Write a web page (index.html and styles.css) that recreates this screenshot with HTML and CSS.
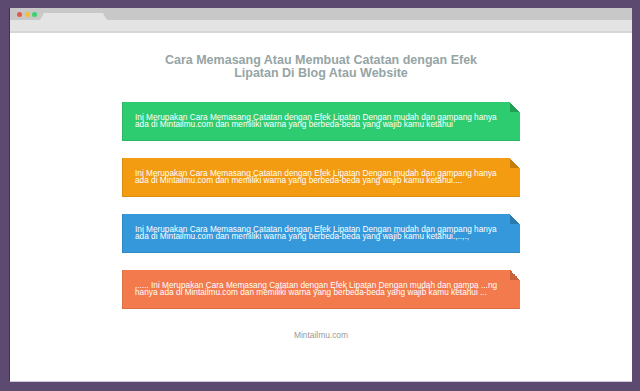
FILE: index.html
```html
<!DOCTYPE html>
<html>
<head>
<meta charset="utf-8">
<link rel="stylesheet" href="styles.css">
</head>
<body>
<div class="window">
  <div class="titlebar">
    <span class="dot red"></span>
    <span class="dot yellow"></span>
    <span class="dot green"></span>
    <svg class="tab" width="67" height="7" viewBox="0 0 67 7"><polygon points="0,7 4,0 63,0 67,7" fill="#e4e4e4"/></svg>
  </div>
  <div class="toolbar"></div>
  <div class="page">
    <h1 class="title">Cara Memasang Atau Membuat Catatan dengan Efek<br>Lipatan Di Blog Atau Website</h1>
    <div class="note note-green"><p class="note-text">Ini Merupakan Cara Memasang Catatan dengan Efek Lipatan Dengan mudah dan gampang hanya ada di Mintailmu.com dan memiliki warna yang berbeda-beda yang wajib kamu ketahui</p></div>
    <div class="note note-orange"><p class="note-text">Ini Merupakan Cara Memasang Catatan dengan Efek Lipatan Dengan mudah dan gampang hanya ada di Mintailmu.com dan memiliki warna yang berbeda-beda yang wajib kamu ketahui....</p></div>
    <div class="note note-blue"><p class="note-text">Ini Merupakan Cara Memasang Catatan dengan Efek Lipatan Dengan mudah dan gampang hanya ada di Mintailmu.com dan memiliki warna yang berbeda-beda yang wajib kamu ketahui.,..,.,</p></div>
    <div class="note note-red"><p class="note-text">...... Ini Merupakan Cara Memasang Catatan dengan Efek Lipatan Dengan mudah dan gampa ...ng hanya ada di Mintailmu.com dan memiliki warna yang berbeda-beda yang wajib kamu ketahui ...</p></div>
    <div class="footer">Mintailmu.com</div>
  </div>
</div>
</body>
</html>
```

FILE: styles.css
```css
html, body {
  margin: 0;
  padding: 0;
}
body {
  background: #5d4a70;
  padding: 8px 8px 10px 10px;
  font-family: "Liberation Sans", Arial, sans-serif;
}
.window {
  width: 622px;
  height: 373px;
  background: #fff;
  display: flex;
  flex-direction: column;
  box-shadow: -1px 0 0 #432f5c, 0 1px 0 #cfc8d6;
}
.titlebar {
  height: 12px;
  background: #c8c8c8;
  display: flex;
  align-items: center;
  padding-left: 7px;
  gap: 2.5px;
}
.dot {
  width: 5px;
  height: 5px;
  border-radius: 50%;
  margin-top: 1px;
}
.dot.red { background: #e9564a; }
.dot.yellow { background: #f2c12e; }
.dot.green { background: #3fd070; }
.tab {
  align-self: flex-end;
  display: block;
}
.toolbar {
  height: 11px;
  background: #e4e4e4;
  border-bottom: 2px solid #d6d6d6;
}
.page {
  flex: 1;
  display: flex;
  flex-direction: column;
  align-items: center;
  padding-top: 21px;
}
.title {
  margin: 0 0 22px;
  font-size: 12.5px;
  line-height: 13px;
  font-weight: bold;
  color: #95a5a6;
  text-align: center;
}
.note {
  position: relative;
  box-sizing: border-box;
  width: 398px;
  height: 39px;
  padding: 0 15px 0 13px;
  margin-bottom: 17px;
  display: flex;
  align-items: center;
  border-bottom: 1px solid var(--edge);
  border-left: 1px solid var(--edge);
  padding-left: 12px;
}
.note-text {
  margin: 0;
  font-size: 8.27px;
  line-height: 7.5px;
  color: #fff;
}
.note::after {
  content: "";
  position: absolute;
  top: 0;
  right: 0;
  width: 10px;
  height: 10px;
  background: linear-gradient(45deg, var(--fold) 50%, #fff 50%);
}
.note-green { background: #2ecc71; --edge: #29b865; --fold: #239c55; }
.note-orange { background: #f39c12; --edge: #da8c10; --fold: #c67f0e; }
.note-blue { background: #3498db; --edge: #2f89c5; --fold: #2a7ab0; }
.note-red { background: #f27a4c; --edge: #da6e44; --fold: #c8623c; }
.footer {
  margin-top: 4px;
  font-size: 8.4px;
  color: #999;
}
```
